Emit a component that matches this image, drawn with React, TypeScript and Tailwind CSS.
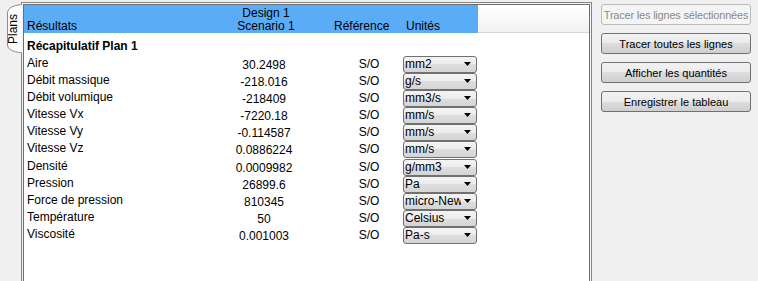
import React from 'react';

type Row = { label: string; value: string; unit: string };

const ROWS: Row[] = [
  { label: 'Aire', value: '30.2498', unit: 'mm2' },
  { label: 'Débit massique', value: '-218.016', unit: 'g/s' },
  { label: 'Débit volumique', value: '-218409', unit: 'mm3/s' },
  { label: 'Vitesse Vx', value: '-7220.18', unit: 'mm/s' },
  { label: 'Vitesse Vy', value: '-0.114587', unit: 'mm/s' },
  { label: 'Vitesse Vz', value: '0.0886224', unit: 'mm/s' },
  { label: 'Densité', value: '0.0009982', unit: 'g/mm3' },
  { label: 'Pression', value: '26899.6', unit: 'Pa' },
  { label: 'Force de pression', value: '810345', unit: 'micro-Newton' },
  { label: 'Température', value: '50', unit: 'Celsius' },
  { label: 'Viscosité', value: '0.001003', unit: 'Pa-s' },
];

const BUTTONS = ['Tracer toutes les lignes', 'Afficher les quantités', 'Enregistrer le tableau'];

const UnitSelect: React.FC<{ unit: string }> = ({ unit }) => (
  <div className="ml-[3px] w-[74px] h-[17px] flex items-center border border-[#707070] rounded-[3px] bg-[linear-gradient(#f4f4f4,#ececec_50%,#dedede_50%,#d4d4d4)]">
    <span className="w-[57px] pl-px overflow-hidden whitespace-nowrap leading-[15px]">{unit}</span>
    {/* dropdown arrow */}
    <svg width="8" height="5" viewBox="0 0 8 5" className="ml-[3px]">
      <polygon points="0,0 7,0 3.5,4" fill="#000" />
    </svg>
  </div>
);

const PlansTab: React.FC = () => (
  <div className="relative w-[21px] h-[60px]">
    <svg width="22" height="60" viewBox="0 0 22 60" className="absolute left-0 top-0">
      <path d="M22 4.5 C 12 5.5, 8 8, 7.5 13 L 7.5 45 C 8 49.5, 12 51.5, 22 53" fill="#fcfcfc" stroke="#8c8c8c" strokeWidth="1" />
    </svg>
    <span className="absolute left-[13px] top-[29px] -translate-x-1/2 -translate-y-1/2 -rotate-90 whitespace-nowrap leading-[12px]">Plans</span>
  </div>
);

export default function App() {
  return (
    <div className="w-[758px] h-[281px] overflow-hidden flex bg-[#f0f0f0] text-[12px] text-black font-['Liberation_Sans',Arial,sans-serif]">
      <PlansTab />

      {/* table frame */}
      <div className="mt-[2px] w-[571px] h-[300px] shrink-0 border border-[#858585] p-px bg-[#f4f4f4]">
        <div className="h-full border border-[#6e6e6e] bg-white">
          {/* header */}
          <div className="flex h-[28px]">
            <div className="flex w-[454px] bg-[#5aacf6] leading-[12px]">
              <div className="w-[186px] pl-[3px] pt-[15px]">Résultats</div>
              <div className="w-[112px] pt-[2px] text-center leading-[13px]">
                <div>Design 1</div>
                <div>Scenario 1</div>
              </div>
              <div className="w-[82px] pl-[12px] pt-[15px]">Référence</div>
              <div className="pl-[2px] pt-[15px]">Unités</div>
            </div>
            <div className="flex-1 border-b border-[#d5d5d5] bg-[linear-gradient(#ffffff,#f1f2f4)]" />
          </div>

          <div className="h-[22.5px] pl-[3px] pt-[6px] font-bold leading-[14px]">Récapitulatif Plan 1</div>

          {ROWS.map((row) => (
            <div key={row.label} className="flex h-[17.2px] leading-[14px]">
              <div className="w-[186px] pl-[3px]">{row.label}</div>
              <div className="w-[108px] pt-[2px] text-center">{row.value}</div>
              <div className="w-[82px] pl-[20px] pt-px text-center">S/O</div>
              <UnitSelect unit={row.unit} />
            </div>
          ))}
        </div>
      </div>

      {/* action buttons */}
      <div className="pl-[9px] pt-[4px] flex flex-col gap-[8px] text-[11px]">
        <button
          disabled
          className="w-[150px] h-[21px] rounded-[3px] border border-[#bcbcbc] bg-[#f4f4f4] text-[#8a8a8a] leading-[14px] whitespace-nowrap tracking-[-0.2px]"
        >
          Tracer les lignes sélectionnées
        </button>
        {BUTTONS.map((label) => (
          <button
            key={label}
            className="w-[150px] h-[21px] rounded-[3px] border border-[#707070] bg-[linear-gradient(#f2f2f2,#ebebeb_50%,#dddddd_50%,#cfcfcf)] leading-[14px] whitespace-nowrap"
          >
            {label}
          </button>
        ))}
      </div>
    </div>
  );
}
